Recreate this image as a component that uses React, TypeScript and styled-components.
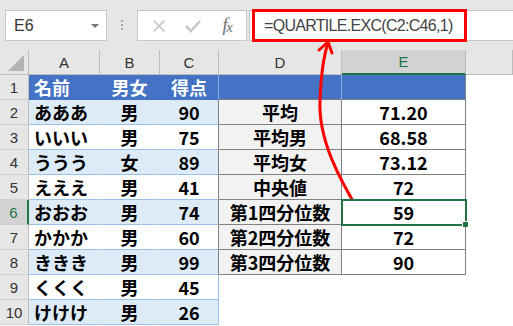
import styled, { createGlobalStyle } from 'styled-components'

const GlobalStyle = createGlobalStyle`
  html, body {
    margin: 0;
    padding: 0;
    background: #ffffff;
  }
`

const people = [
  ['あああ', '男', '90'],
  ['いいい', '男', '75'],
  ['ううう', '女', '89'],
  ['えええ', '男', '41'],
  ['おおお', '男', '74'],
  ['かかか', '男', '60'],
  ['ききき', '男', '99'],
  ['くくく', '男', '45'],
  ['けけけ', '男', '26'],
]

const stats = [
  ['平均', '71.20'],
  ['平均男', '68.58'],
  ['平均女', '73.12'],
  ['中央値', '72'],
  ['第1四分位数', '59'],
  ['第2四分位数', '72'],
  ['第3四分位数', '90'],
]

const columns = ['', 'A', 'B', 'C', 'D', 'E', '']
const ACTIVE_COL = 'E'
const ACTIVE_ROW = 6

type Tone = 'head' | 'band' | 'plain' | 'label' | 'value' | 'blank'

const toneBg: Record<Tone, string> = {
  head: '#4472c4',
  band: '#ddebf7',
  plain: '#ffffff',
  label: '#f2f2f2',
  value: '#ffffff',
  blank: '#ffffff',
}

const App = () => {
  const tableEdge = (row: number) => (row === 1 ? '#8eaadb' : row <= 8 ? '#808080' : '#9bc2e6')

  return (
    <>
      <GlobalStyle />
      <Page>
        <FormulaBar>
          <NameBox>
            E6
            <Caret />
          </NameBox>
          <Grip>
            <i />
            <i />
            <i />
          </Grip>
          <ButtonBox>
            <ToolIcon width="24" height="16" viewBox="0 0 24 16">
              <path d="M6.5 2.5 L17.5 13.5 M17.5 2.5 L6.5 13.5" stroke="#c4c4c4" strokeWidth="1.6" fill="none" />
            </ToolIcon>
            <ToolIcon width="24" height="16" viewBox="0 0 24 16">
              <path d="M5 8 L10 13 L19 3" stroke="#c8c8c8" strokeWidth="2.6" fill="none" />
            </ToolIcon>
            <FxGlyph>
              f<sub>x</sub>
            </FxGlyph>
          </ButtonBox>
          <FormulaInput>
            =QUARTILE.EXC(C2:C46,1)
            <RedFrame />
          </FormulaInput>
        </FormulaBar>

        <Sheet>
          {columns.map((c, i) =>
            i === 0 ? (
              <ColHead key="corner">
                <CornerMark />
              </ColHead>
            ) : (
              <ColHead key={i} $active={c === ACTIVE_COL}>
                {c}
              </ColHead>
            ),
          )}

          {Array.from({ length: 10 }, (_, r) => {
            const row = r + 1
            const band = row % 2 === 0
            const person = row > 1 ? people[row - 2] : ['名前', '男女', '得点']
            const stat = row > 1 ? stats[row - 2] : ['', '']
            const abc: Tone = row === 1 ? 'head' : band ? 'band' : 'plain'
            const line = row === 1 ? 'transparent' : '#9bc2e6'
            return [
              <RowHead key={`h${row}`} $active={row === ACTIVE_ROW}>
                {row}
              </RowHead>,
              <Cell key={`a${row}`} $tone={abc} $left $bottom={line}>
                {person[0]}
              </Cell>,
              <Cell key={`b${row}`} $tone={abc} $bottom={line}>
                {person[1]}
              </Cell>,
              <Cell key={`c${row}`} $tone={abc} $bottom={line} $right={tableEdge(row)}>
                {person[2]}
              </Cell>,
              stat ? (
                <Cell key={`d${row}`} $tone={row === 1 ? 'head' : 'label'} $bottom="#808080" $right={row === 1 ? '#8eaadb' : '#808080'}>
                  {stat[0]}
                </Cell>
              ) : (
                <Cell key={`d${row}`} $tone="blank" />
              ),
              stat ? (
                <Cell
                  key={`e${row}`}
                  $tone={row === 1 ? 'head' : 'value'}
                  $bottom="#808080"
                  $right="#808080"
                  $selected={row === ACTIVE_ROW}
                >
                  {stat[1]}
                </Cell>
              ) : (
                <Cell key={`e${row}`} $tone="blank" />
              ),
              <Cell key={`f${row}`} $tone="blank" />,
            ]
          })}
        </Sheet>

        <Annotation width="513" height="326" viewBox="0 0 513 326">
          <path
            d="M360 213 C340 180 318 140 320 100 C321 75 324 55 328 43"
            fill="none"
            stroke="#ff0000"
            strokeWidth="3"
            strokeLinecap="round"
          />
          <path d="M319 50 L328 42 L332 53" fill="none" stroke="#ff0000" strokeWidth="3" strokeLinecap="round" strokeLinejoin="round" />
        </Annotation>
      </Page>
    </>
  )
}

export default App

const Page = styled.div`
  position: relative;
  width: 513px;
  height: 326px;
  overflow: hidden;
  background: #ffffff;
  font-family: 'Liberation Sans', Arial, sans-serif;
`
const FormulaBar = styled.div`
  display: flex;
  align-items: flex-start;
  height: 50px;
  box-sizing: border-box;
  padding: 10px 0 0 5px;
  background: #e6e6e6;
`
const NameBox = styled.div`
  position: relative;
  display: flex;
  align-items: center;
  width: 102px;
  height: 31px;
  box-sizing: border-box;
  padding-left: 8px;
  border: 1px solid #c6c6c6;
  background: #ffffff;
  color: #333333;
  font-size: 16px;
`
const Caret = styled.span`
  position: absolute;
  right: 7px;
  top: 13px;
  border-left: 4px solid transparent;
  border-right: 4px solid transparent;
  border-top: 4px solid #777777;
`
const Grip = styled.div`
  display: flex;
  flex-direction: column;
  align-items: center;
  gap: 2px;
  width: 30px;
  padding-top: 10px;

  i {
    display: block;
    width: 2px;
    height: 2px;
    background: #a6a6a6;
  }
`
const ButtonBox = styled.div`
  display: flex;
  align-items: center;
  justify-content: space-around;
  width: 110px;
  height: 31px;
  box-sizing: border-box;
  padding: 0 2px 0 4px;
  border: 1px solid #c6c6c6;
  background: #ffffff;
`
const ToolIcon = styled.svg`
  display: block;
`
const FxGlyph = styled.span`
  width: 24px;
  text-align: center;
  color: #6a6a6a;
  font-family: 'Liberation Serif', serif;
  font-style: italic;
  font-size: 18px;
  letter-spacing: -1px;

  sub {
    font-size: 14px;
    vertical-align: -1px;
  }
`
const FormulaInput = styled.div`
  position: relative;
  display: flex;
  align-items: center;
  flex: 1;
  height: 31px;
  margin-left: 2px;
  box-sizing: border-box;
  padding-left: 14px;
  border: 1px solid #c6c6c6;
  border-right: 0;
  background: #ffffff;
  color: #444444;
  font-size: 16px;
  letter-spacing: -0.7px;
`
const RedFrame = styled.span`
  position: absolute;
  left: 2px;
  top: -2px;
  width: 215px;
  height: 33px;
  box-sizing: border-box;
  border: 3px solid #ff0000;
`
const Sheet = styled.div`
  display: grid;
  grid-template-columns: 29px 71px 60px 59px 123px 124px 1fr;
  grid-auto-rows: 25px;
`
const ColHead = styled.div<{ $active?: boolean }>`
  position: relative;
  display: flex;
  align-items: center;
  justify-content: center;
  box-sizing: border-box;
  background: ${(p) => (p.$active ? '#d2d2d2' : '#e6e6e6')};
  border-right: 1px solid #bdbdbd;
  border-bottom: ${(p) => (p.$active ? '2px solid #217346' : '1px solid #bdbdbd')};
  color: ${(p) => (p.$active ? '#217346' : '#333333')};
  font-size: 15px;
`
const CornerMark = styled.span`
  position: absolute;
  right: 4px;
  bottom: 3px;
  border-left: 16px solid transparent;
  border-bottom: 16px solid #b4b4b4;
`
const RowHead = styled.div<{ $active?: boolean }>`
  display: flex;
  align-items: center;
  justify-content: center;
  box-sizing: border-box;
  background: ${(p) => (p.$active ? '#d2d2d2' : '#e6e6e6')};
  border-right: ${(p) => (p.$active ? '2px solid #217346' : '1px solid #bdbdbd')};
  border-bottom: 1px solid #cfcfcf;
  color: ${(p) => (p.$active ? '#217346' : '#333333')};
  font-size: 15px;
`
const Cell = styled.div<{ $tone: Tone; $left?: boolean; $bottom?: string; $right?: string; $selected?: boolean }>`
  position: relative;
  display: flex;
  align-items: center;
  justify-content: ${(p) => (p.$left ? 'flex-start' : 'center')};
  box-sizing: border-box;
  padding-left: ${(p) => (p.$left ? '5px' : '0')};
  background: ${(p) => toneBg[p.$tone]};
  border-bottom: 1px solid ${(p) => p.$bottom ?? 'transparent'};
  border-right: 1px solid ${(p) => p.$right ?? 'transparent'};
  color: ${(p) => (p.$tone === 'head' ? '#ffffff' : '#000000')};
  font-family: 'Noto Sans CJK JP', sans-serif;
  font-size: 18px;
  font-weight: 700;
  line-height: 1;
  ${(p) =>
    p.$selected &&
    `
    z-index: 1;
    outline: 2px solid #217346;
    outline-offset: -1px;
    &::after {
      content: '';
      position: absolute;
      right: -3px;
      bottom: -3px;
      width: 5px;
      height: 5px;
      background: #217346;
      border: 1px solid #ffffff;
      border-width: 1px 0 0 1px;
    }
  `}
`
const Annotation = styled.svg`
  position: absolute;
  left: 0;
  top: 0;
  pointer-events: none;
`
